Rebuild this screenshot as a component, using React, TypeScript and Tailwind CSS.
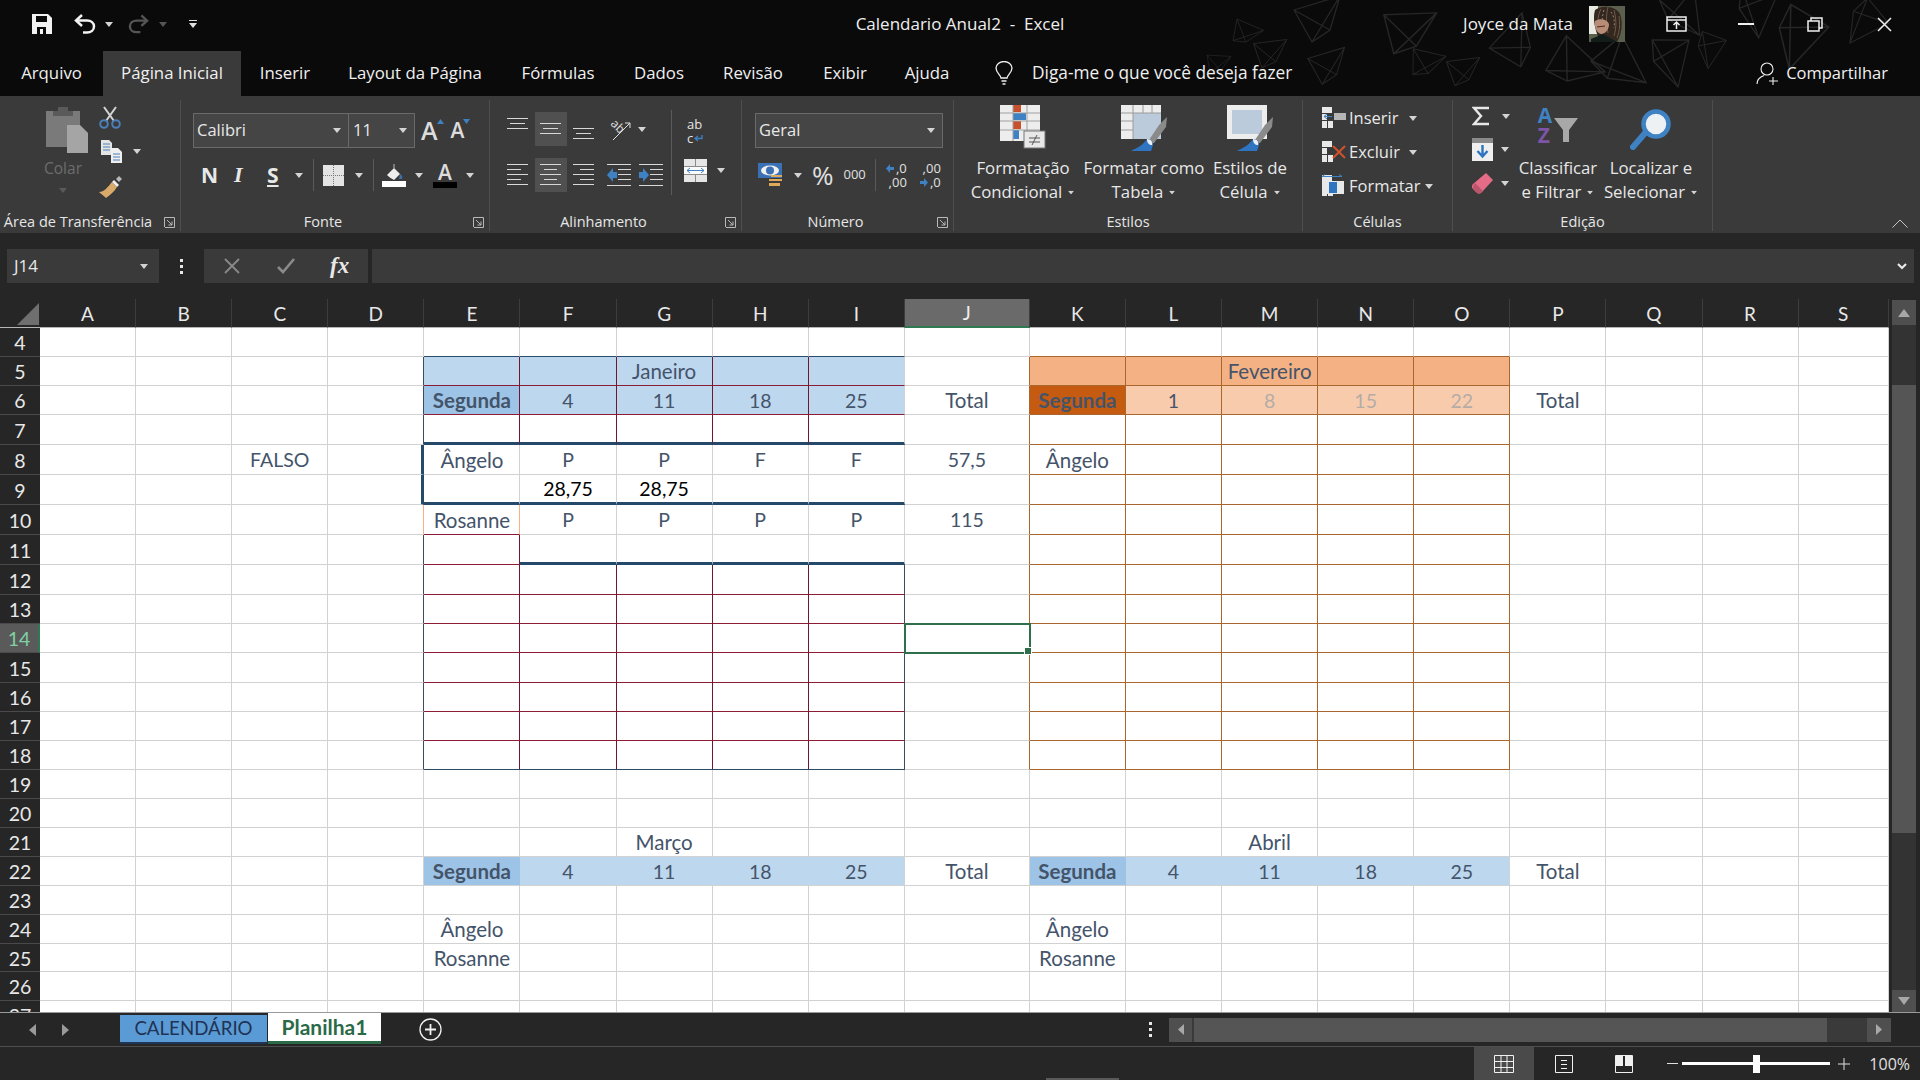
import type { ReactNode } from "react";

const COLS = "ABCDEFGHIJKLMNOPQRS".split("");
const ROWS = Array.from({ length: 24 }, (_, i) => i + 4);

const TEXTS: Record<string, string> = {
  G5: "Janeiro", E6: "Segunda", F6: "4", G6: "11", H6: "18", I6: "25", J6: "Total",
  M5: "Fevereiro", K6: "Segunda", L6: "1", M6: "8", N6: "15", O6: "22", P6: "Total",
  C8: "FALSO", E8: "Ângelo", F8: "P", G8: "P", H8: "F", I8: "F", J8: "57,5", K8: "Ângelo",
  F9: "28,75", G9: "28,75",
  E10: "Rosanne", F10: "P", G10: "P", H10: "P", I10: "P", J10: "115",
  G21: "Março", M21: "Abril",
  E22: "Segunda", F22: "4", G22: "11", H22: "18", I22: "25", J22: "Total",
  K22: "Segunda", L22: "4", M22: "11", N22: "18", O22: "25", P22: "Total",
  E24: "Ângelo", K24: "Ângelo", E25: "Rosanne", K25: "Rosanne",
};

const GRID_R = "border-r border-r-[#d2d2d2]";
const GRID_B = "border-b border-b-[#d2d2d2]";
const WINE_R = "border-r border-r-[#6e1830]";
const WINE_B = "border-b border-b-[#8c1c36]";
const NAVY_R = "border-r border-r-[#3d4d5e]";
const NAVY_B = "border-b border-b-[#2b4a66]";
const THICK_R = "border-r-[3px] border-r-[#25496a]";
const THICK_B = "border-b-[3px] border-b-[#25496a]";
const BROWN_R = "border-r border-r-[#a9672e]";
const BROWN_B = "border-b border-b-[#a9672e]";
const PEACH_R = "border-r border-r-[#f4b183]";
const NONE_R = "border-r border-r-transparent";

function rightBorder(r: number, c: number) {
  if (r === 22 && ((c >= 4 && c <= 7) || (c >= 10 && c <= 13))) return NONE_R;
  if (r >= 5 && r <= 18 && c >= 9 && c <= 14) return BROWN_R;
  if (r < 5 || r > 18) return GRID_R;
  if (c === 3) {
    if (r === 8 || r === 9) return THICK_R;
    if (r === 10) return PEACH_R;
    return NAVY_R;
  }
  if (c >= 4 && c <= 7) {
    if (r <= 7 || r >= 12) return WINE_R;
    if (r === 10 && c === 4) return PEACH_R;
    if (r === 11 && c === 4) return WINE_R;
    return GRID_R;
  }
  if (c === 8 && r >= 12) return NAVY_R;
  return GRID_R;
}

function bottomBorder(r: number, c: number) {
  if (c >= 10 && c <= 14 && r >= 4 && r <= 18) return BROWN_B;
  if (c < 4 || c > 8) return GRID_B;
  if (r === 4 || r === 18) return NAVY_B;
  if (r === 7 || r === 9) return THICK_B;
  if (r === 5 || r === 6 || (r >= 12 && r <= 17)) return WINE_B;
  if (r === 10 || r === 11) return c === 4 ? WINE_B : r === 11 ? THICK_B : GRID_B;
  return GRID_B;
}

function fill(r: number, c: number) {
  if (r === 5 && c >= 4 && c <= 8) return "bg-[#bdd7ee]";
  if (r === 5 && c >= 10 && c <= 14) return "bg-[#f4b183]";
  if (r === 6 && c === 4) return "bg-[#9dc3e6]";
  if (r === 6 && c >= 5 && c <= 8) return "bg-[#bdd7ee]";
  if (r === 6 && c === 10) return "bg-[#c55a11]";
  if (r === 6 && c >= 11 && c <= 14) return "bg-[#f8cbad]";
  if (r === 22 && (c === 4 || c === 10)) return "bg-[#9dc3e6]";
  if (r === 22 && ((c >= 5 && c <= 8) || (c >= 11 && c <= 14))) return "bg-[#bdd7ee]";
  return "bg-white";
}

function textColor(key: string) {
  if (key === "F9" || key === "G9") return "text-black";
  if (key === "M6" || key === "N6" || key === "O6") return "text-[#b5aca6]";
  return "text-[#44546a]";
}

function Caret({ className = "" }: { className?: string }) {
  return (
    <svg width="8" height="5" viewBox="0 0 8 5" className={className}>
      <path d="M0 0h8L4 5z" fill="#d4d4d4" />
    </svg>
  );
}

function Launcher() {
  return (
    <svg width="11" height="11" viewBox="0 0 11 11" fill="none" stroke="#b8b8b8">
      <path d="M.5 10V.5H10.5V10.5H1" />
      <path d="M3 3l5 5M8 4.5V8H4.5" />
    </svg>
  );
}

function Group({ width, label, launcher, children }: { width: string; label: string; launcher?: boolean; children: ReactNode }) {
  return (
    <div className={`${width} mt-1 h-[131px] shrink-0 border-r border-[#4e4e4e] flex flex-col`}>
      <div className="h-[113px] flex">{children}</div>
      <div className="h-[18px] flex items-center text-[14.5px] text-[#e6e6e6]">
        <span className={`flex-1 text-center whitespace-nowrap ${launcher ? "pr-[8px]" : ""}`}>{label}</span>
        {launcher && (
          <span className="mr-[5px] flex">
            <Launcher />
          </span>
        )}
      </div>
    </div>
  );
}

function AlignLines({ rows }: { rows: number[][] }) {
  return (
    <svg width="22" height="24" viewBox="0 0 22 24" stroke="#d8d8d8" strokeWidth="1">
      {rows.map((l, i) => (
        <line key={i} x1={l[0]} x2={l[1]} y1={l[2] + 0.5} y2={l[2] + 0.5} />
      ))}
    </svg>
  );
}

const V_TOP = [[0, 21, 1], [3, 18, 6], [0, 21, 11]];
const V_MID = [[0, 21, 6], [3, 18, 11], [0, 21, 16]];
const V_BOT = [[0, 21, 11], [3, 18, 16], [0, 21, 21]];
const H_LEFT = [[0, 21, 1], [0, 14, 6], [0, 21, 11], [0, 14, 16], [0, 21, 21]];
const H_CENTER = [[0, 21, 1], [4, 17, 6], [0, 21, 11], [4, 17, 16], [0, 21, 21]];
const H_RIGHT = [[0, 21, 1], [7, 21, 6], [0, 21, 11], [7, 21, 16], [0, 21, 21]];

function Indent({ flip }: { flip?: boolean }) {
  return (
    <svg width="24" height="24" viewBox="0 0 24 24">
      <g stroke="#d8d8d8">
        <path d="M0 1.500H24M0 22.500H24M11 6.500H24M11 11.500H24M11 16.500H24" />
      </g>
      {flip ? (
        <path d="M0 9h4V5l6 7-6 7v-4H0z" fill="#3f82c4" />
      ) : (
        <path d="M10 9H6V5l-6 7 6 7v-4h4z" fill="#3f82c4" />
      )}
    </svg>
  );
}

function Kite({ x, y, r, s = 1 }: { x: number; y: number; r: number; s?: number }) {
  return (
    <path
      transform={`translate(${x} ${y}) rotate(${r}) scale(${s})`}
      d="M-24-8L22-22L12 12L-6 24ZM-24-8L12 12M22-22L-6 24"
    />
  );
}

function TitleBar() {
  return (
    <div className="h-[51px] pb-[3px] grid grid-cols-[1fr_auto_1fr] items-center">
      <div className="flex items-center pl-8">
        <svg width="20" height="20" viewBox="0 0 20 20">
          <path d="M0 0h16l4 4v16H0z" fill="#f2f2f2" />
          <path d="M4 2h11v6H4z" fill="#0a0a0a" />
          <path d="M5 13h9v7H5z" fill="#0a0a0a" />
          <path d="M8 15h3v5H8z" fill="#f2f2f2" />
        </svg>
        <svg width="22" height="20" viewBox="0 0 22 20" fill="none" stroke="#f2f2f2" strokeWidth="2.500" className="ml-[22px]">
          <path d="M8 1L2 6.500 8 12" />
          <path d="M2 6.500h11c4 0 7 2.500 7 6s-3 6-7 6H9" />
        </svg>
        <Caret className="ml-[9px]" />
        <svg width="21" height="20" viewBox="0 0 22 20" fill="none" stroke="#555" strokeWidth="2.500" className="ml-[15px]">
          <path d="M14 1l6 5.500L14 12" />
          <path d="M20 6.500H9c-4 0-7 2.500-7 6s3 6 7 6h4" />
        </svg>
        <svg width="8" height="5" viewBox="0 0 8 5" className="ml-[10px]">
          <path d="M0 0h8L4 5z" fill="#555" />
        </svg>
        <svg width="8" height="8" viewBox="0 0 8 8" className="ml-[22px]">
          <path d="M0 0h8v1H0z M0 3h8L4 8z" fill="#e0e0e0" />
        </svg>
      </div>
      <div className="text-[17px] text-[#efefef] whitespace-pre">Calendario Anual2  -  Excel</div>
      <div className="flex items-center justify-end text-[17px] text-[#efefef]">
        <span>Joyce da Mata</span>
        <svg width="36" height="36" viewBox="0 0 36 36" className="ml-[16px]">
          <rect width="36" height="36" fill="#5b5f4e" />
          <rect width="9" height="28" fill="#e9ebe2" />
          <path d="M6 4C12-1 26-1 31 8c3 8 2 20-3 28H12C7 28 3 14 6 4z" fill="#33271e" />
          <path d="M12 3c-3 6-4 12-2 20M19 1c-2 8-2 16 0 26M25 4c2 8 3 16 0 26M30 10c1 8 1 14-2 22" stroke="#6e5a48" fill="none" />
          <path d="M22 6c3 4 4 10 3 16M15 4c-2 6-2 10-1 15" stroke="#8a8674" fill="none" strokeDasharray="2 2" />
          <path d="M6 15c5-3 12-2 14 3 0 6-4 10-8 10-4-1-7-6-6-13z" fill="#b98c77" />
          <path d="M8 21l8-1" stroke="#4a2d25" />
          <path d="M2 33l12-5 14 8H2z" fill="#121c19" />
        </svg>
        <svg width="21" height="16" viewBox="0 0 21 16" fill="none" stroke="#f0f0f0" strokeWidth="1.500" className="ml-[41px]">
          <path d="M1 1h19v14H1zM1 4h19" />
          <path d="M10.500 13V6.500M7.500 9l3-3 3 3" />
        </svg>
        <span className="ml-[51px] w-4 h-[2px] bg-[#f0f0f0]" />
        <svg width="16" height="15" viewBox="0 0 16 15" fill="none" stroke="#f0f0f0" strokeWidth="1.500" className="ml-[53px]">
          <path d="M1 4h11v10H1zM4 4V1h11v10h-3" />
        </svg>
        <svg width="15" height="15" viewBox="0 0 15 15" stroke="#f0f0f0" strokeWidth="1.500" className="ml-[54px] mr-[28px]">
          <path d="M1 1l13 13M14 1L1 14" />
        </svg>
      </div>
    </div>
  );
}

const TABS: [string, string][] = [
  ["Arquivo", "w-[103px]"],
  ["Página Inicial", "w-[138px] bg-[#3a3a3a]"],
  ["Inserir", "w-[88px]"],
  ["Layout da Página", "w-[172px]"],
  ["Fórmulas", "w-[114px]"],
  ["Dados", "w-[88px]"],
  ["Revisão", "w-[100px]"],
  ["Exibir", "w-[84px]"],
  ["Ajuda", "w-[80px]"],
];

function TabRow() {
  return (
    <div className="h-[45px] flex text-[16.8px] text-[#f0f0f0]">
      {TABS.map(([name, cls]) => (
        <div key={name} className={`${cls} pb-[2px] flex items-center justify-center whitespace-nowrap`}>
          {name}
        </div>
      ))}
      <div className="flex items-center ml-[28px] pb-[2px]">
        <svg width="18" height="24" viewBox="0 0 18 24" fill="none" stroke="#f0f0f0" strokeWidth="1.300">
          <path d="M6 17c0-3-5-5-5-10a8 6.500 0 0 1 16 0c0 5-5 7-5 10z" />
          <path d="M6.500 20h5M7.500 23h3" />
        </svg>
        <span className="ml-[19px] text-[17.3px]">Diga-me o que você deseja fazer</span>
      </div>
      <div className="ml-auto flex items-center pr-[32px] text-[16.5px]">
        <svg width="23" height="23" viewBox="0 0 23 23" fill="none" stroke="#efefef" strokeWidth="1.100">
          <circle cx="11" cy="7" r="6" />
          <path d="M1 22c0-5 3-7 7-8.500M17 15v8M13 19h9" />
        </svg>
        <span className="ml-[7px]">Compartilhar</span>
      </div>
    </div>
  );
}

function ClipboardGroup() {
  return (
    <Group width="w-[181px]" label="Área de Transferência" launcher>
      <div className="ml-[36px] w-[54px] flex flex-col items-center pt-[7px] text-[#6d6d6d] text-[15.500px]">
        <svg width="42" height="46" viewBox="0 0 42 46" className="ml-[7px]">
          <path d="M0 4h34v36H0z" fill="#7a7a7a" />
          <path d="M7 4h20v5H7zM12 0h10v4H12z" fill="#5a5a5a" />
          <path d="M21 18h13l8 8v20H21z" fill="#a5a5a5" />
        </svg>
        <span className="mt-[5px] leading-[20px]">Colar</span>
        <svg width="8" height="5" viewBox="0 0 8 5" className="mt-[10px]">
          <path d="M0 0h8L4 5z" fill="#5a5a5a" />
        </svg>
      </div>
      <div className="ml-[9px] flex flex-col pt-[6px]">
        <svg width="22" height="23" viewBox="0 0 22 23" fill="none">
          <path d="M5 1l10 14M17 1L7 15" stroke="#d5d5d5" strokeWidth="2" />
          <circle cx="5" cy="18" r="3.800" stroke="#4a7fb8" strokeWidth="2" />
          <circle cx="17" cy="18" r="3.800" stroke="#4a7fb8" strokeWidth="2" />
        </svg>
        <div className="flex items-center mt-[11px] ml-[2px]">
          <svg width="21" height="23" viewBox="0 0 21 23">
            <path d="M0 0h8l3 3v12H0z" fill="#e4e4e4" />
            <path d="M2 4h7M2 7h7M2 10h7" stroke="#4a7fb8" />
            <path d="M10 8h7l4 4v11H10z" fill="#efefef" />
            <path d="M12 14h7M12 17h7M12 20h7" stroke="#4a7fb8" />
          </svg>
          <Caret className="ml-[11px]" />
        </div>
        <svg width="23" height="22" viewBox="0 0 23 22" className="mt-[13px]">
          <path d="M13 6l5 5c-3 5-7 8-11 11-2-2-5-4-7-6 5 0 9-5 13-10z" fill="#d9aa6a" />
          <path d="M13 6l5 5 2-2-5-5z" fill="#efefef" />
          <path d="M17 3l3-3 3 3-3 3z" fill="#b8b8b8" />
        </svg>
      </div>
    </Group>
  );
}

function FontGroup() {
  return (
    <Group width="w-[309px]" label="Fonte" launcher>
      <div className="pl-3 pt-[13px] flex flex-col">
        <div className="flex items-center h-[35px]">
          <div className="w-[156px] h-[35px] bg-[#454545] border border-[#6a6a6a] flex items-center justify-between pl-[3px] pr-[7px] text-[16.500px] text-[#e8e8e8]">
            Calibri <Caret />
          </div>
          <div className="w-[66px] h-[35px] bg-[#454545] border border-l-0 border-[#6a6a6a] flex items-center justify-between pl-[4px] pr-[7px] text-[16.500px] text-[#e8e8e8]">
            11 <Caret />
          </div>
          <div className="ml-[6px] relative text-[25px] leading-none font-semibold text-[#dcdcdc]">
            A
            <svg width="7" height="5" viewBox="0 0 7 5" className="absolute -right-[6px] top-[1px]">
              <path d="M3.500 0l3.500 5H0z" fill="#3f82c4" />
            </svg>
          </div>
          <div className="ml-[13px] relative text-[21px] leading-none font-semibold text-[#dcdcdc]">
            A
            <svg width="7" height="5" viewBox="0 0 7 5" className="absolute -right-[6px] -top-[1px]">
              <path d="M0 0h7L3.500 5z" fill="#3f82c4" />
            </svg>
          </div>
        </div>
        <div className="flex items-center mt-[11px] h-[32px] text-[#e8e8e8]">
          <span className="ml-[8px] w-[17px] text-[21px] font-bold leading-none">N</span>
          <span className="ml-[16px] w-[13px] text-[22px] italic font-bold font-['Liberation_Serif',serif] leading-none">I</span>
          <span className="ml-[20px] w-[13px] text-[21px] font-bold underline leading-none">S</span>
          <Caret className="ml-[15px]" />
          <span className="ml-[10px] w-px h-[32px] bg-[#5a5a5a]" />
          <svg width="21" height="21" viewBox="0 0 21 21" className="ml-[9px]">
            <rect width="21" height="21" fill="#e4e4e4" />
            <path d="M10.500 0v21M0 10.500h21" stroke="#777" strokeDasharray="1 1" />
          </svg>
          <Caret className="ml-[11px]" />
          <span className="ml-[10px] w-px h-[32px] bg-[#5a5a5a]" />
          <svg width="24" height="24" viewBox="0 0 24 24" className="ml-[8px]">
            <path d="M5 12l7-7 6 6-6 6c-2-1-5-3-7-5z" fill="#eeeeee" />
            <path d="M12 5V1" stroke="#bbb" />
            <path d="M18 11c2 1 3 3 2 5h-3z" fill="#3f6fa8" />
            <path d="M0 18h24v6H0z" fill="#fff" />
          </svg>
          <Caret className="ml-[9px]" />
          <div className="ml-[10px] w-[24px] flex flex-col items-center">
            <span className="text-[21px] leading-[20px] font-semibold text-[#dcdcdc]">A</span>
            <span className="w-[24px] h-[6px] bg-black" />
          </div>
          <Caret className="ml-[9px]" />
        </div>
      </div>
    </Group>
  );
}

function AlignmentGroup() {
  const cell = "w-[32px] h-[34px] flex items-center justify-center";
  return (
    <Group width="w-[252px]" label="Alinhamento" launcher>
      <div className="pl-[12px] pt-[12px] flex">
        <div className="flex flex-col gap-[12px]">
          <div className="flex items-center">
            <div className={cell}><AlignLines rows={V_TOP} /></div>
            <div className={`${cell} bg-[#505050] mx-px`}><AlignLines rows={V_MID} /></div>
            <div className={cell}><AlignLines rows={V_BOT} /></div>
            <svg width="28" height="24" viewBox="0 0 28 24" className="ml-[5px] overflow-visible">
              <text x="5" y="13" fontSize="12" fill="#e0e0e0" transform="rotate(45 12 10)" fontFamily="Open Sans">ab</text>
              <path d="M8 23L25 6M25 6h-5M25 6v5" stroke="#e0e0e0" fill="none" />
            </svg>
            <Caret className="ml-[5px]" />
          </div>
          <div className="flex items-center">
            <div className={cell}><AlignLines rows={H_LEFT} /></div>
            <div className={`${cell} bg-[#505050] mx-px`}><AlignLines rows={H_CENTER} /></div>
            <div className={cell}><AlignLines rows={H_RIGHT} /></div>
            <div className="ml-[7px] flex items-center gap-2">
              <Indent />
              <Indent flip />
            </div>
          </div>
        </div>
        <span className="ml-[8px] -mt-[2px] w-px h-[85px] bg-[#5a5a5a]" />
        <div className="ml-[12px] flex flex-col">
          <div className="ml-[3px] pt-[5px] text-[13px] leading-[14px] text-[#e4e4e4] flex flex-col">
            <span>ab</span>
            <span className="flex items-center">
              c
              <svg width="9" height="7" viewBox="0 0 9 7" className="ml-[1px]">
                <path d="M8 0v3.500H2M4 1L1 3.500 4 6" stroke="#3f82c4" fill="none" strokeWidth="1.300" />
              </svg>
            </span>
          </div>
          <div className="flex items-center mt-[14px]">
            <svg width="23" height="23" viewBox="0 0 23 23">
              <rect width="23" height="23" fill="#e6e6e6" />
              <path d="M0 7.500h23M0 15.500h23M11.500 0v7M11.500 16v7" stroke="#8a8a8a" />
              <rect y="8" width="23" height="7" fill="#fbfbfb" />
              <path d="M3 11.500h17M3 11.500l3-2.500M3 11.500l3 2.500M20 11.500l-3-2.500M20 11.500l-3 2.500" stroke="#3f82c4" fill="none" />
            </svg>
            <Caret className="ml-[10px]" />
          </div>
        </div>
      </div>
    </Group>
  );
}

function NumberGroup() {
  return (
    <Group width="w-[212px]" label="Número" launcher>
      <div className="pl-[13px] pt-[13px] flex flex-col">
        <div className="w-[188px] h-[35px] bg-[#454545] border border-[#6a6a6a] flex items-center justify-between pl-[3px] pr-[7px] text-[16.500px] text-[#e8e8e8]">
          Geral <Caret />
        </div>
        <div className="flex items-center mt-[11px] h-[32px] text-[#e0e0e0]">
          <svg width="25" height="24" viewBox="0 0 25 24" className="ml-[3px]">
            <rect width="24" height="15" fill="#3a70b4" />
            <ellipse cx="12" cy="7.500" rx="9" ry="5" fill="#f0f0f0" />
            <circle cx="12" cy="7.500" r="4" fill="#3a70b4" />
            <path d="M11 16h13v2H11zM13 12h11v2H13zM11 20h11v3H11z" fill="#e0a95a" />
          </svg>
          <Caret className="ml-[11px]" />
          <span className="ml-[10px] text-[26px] leading-none">%</span>
          <span className="ml-[10px] text-[13px]">000</span>
          <span className="ml-[9px] w-px h-[32px] bg-[#5a5a5a]" />
          <div className="ml-[9px] w-[22px] text-[13px] leading-[14px] text-right">
            <div className="flex justify-end items-center">
              <svg width="8" height="9" viewBox="0 0 8 9" className="mr-[2px]"><path d="M4 0v3h4v3H4v3L0 4.500z" fill="#3f82c4" /></svg>,0
            </div>
            <div>,00</div>
          </div>
          <div className="ml-[10px] w-[24px] text-[13px] leading-[14px] text-right">
            <div>,00</div>
            <div className="flex justify-end items-center">
              <svg width="8" height="9" viewBox="0 0 8 9" className="mr-[2px]"><path d="M4 0v3H0v3h4v3l4-4.500z" fill="#3f82c4" /></svg>,0
            </div>
          </div>
        </div>
      </div>
    </Group>
  );
}

function Big({ width, icon, lines }: { width: string; icon: ReactNode; lines: [string, string] }) {
  return (
    <div className={`${width} flex flex-col items-center text-[16.800px] leading-[24px] text-[#e8e8e8]`}>
      <div className="h-[56px] pt-[5px]">{icon}</div>
      <span className="whitespace-nowrap">{lines[0]}</span>
      <span className="flex items-center whitespace-nowrap">
        {lines[1]}
        <Caret className="ml-[5px] scale-75" />
      </span>
    </div>
  );
}

function BrushIcon({ cell }: { cell?: boolean }) {
  return (
    <svg width="46" height="46" viewBox="0 0 46 46">
      <rect x="0" y="0" width="40" height="34" fill="#ededed" />
      <rect x={cell ? 5 : 12} y={cell ? 5 : 8} width={cell ? 30 : 28} height={cell ? 24 : 26} fill="#bccbdb" />
      {!cell && <path d="M0 8h40M12 0v34M0 16h12M0 25h12M22 0v8M31 0v8" stroke="#9a9a9a" />}
      <path d="M26 38l12-18 8-8-1 10-12 16z" fill="#8a8a8a" />
      <path d="M26 34c4 0 6 3 6 6l-2 6H10c6-3 12-6 16-12z" fill="#2f74c0" />
      <path d="M26 34c4 0 6 3 5 6-3 0-5-2-5-6z" fill="#eaf0f6" />
    </svg>
  );
}

function StylesGroup() {
  return (
    <Group width="w-[349px]" label="Estilos">
      <Big
        width="w-[129px] pl-[9px]"
        lines={["Formatação", "Condicional"]}
        icon={
          <svg width="46" height="46" viewBox="0 0 46 46">
            <rect width="40" height="36" fill="#ededed" />
            <path d="M13 0h8v7h-8zM13 16h8v8h-8z" fill="#c8502d" />
            <path d="M13 8h13v7H13zM13 25h6v9h-6z" fill="#3f82c4" />
            <path d="M13 0v36M27 0v36M0 8h40M0 16h40M0 25h40" stroke="#a0a0a0" />
            <rect x="24" y="26" width="21" height="17" fill="#e8e8e8" stroke="#777" />
            <path d="M29 33h11M29 37h11M37 30l-5 10" stroke="#555" />
          </svg>
        }
      />
      <Big width="w-[122px]" lines={["Formatar como", "Tabela"]} icon={<BrushIcon />} />
      <Big width="w-[90px]" lines={["Estilos de", "Célula"]} icon={<BrushIcon cell />} />
    </Group>
  );
}

function CellRowIcon({ kind }: { kind: "ins" | "del" | "fmt" }) {
  return (
    <svg width="28" height="24" viewBox="0 0 28 24">
      <g fill="#e8e8e8">
        <path d="M1 1h10v6H1zM1 15h5v7H1zM7 15h5v7H7z" />
        {kind !== "fmt" && <path d="M1 8h5v6H1z" />}
        {kind === "fmt" && <path d="M1 7h22v13H1z" />}
      </g>
      {kind === "ins" && <path d="M13 7h12v7H13z" fill="#b5b5b5" />}
      {kind === "ins" && <path d="M11 10.500H3M3 10.500l3-2.500M3 10.500l3 2.500" stroke="#3f82c4" fill="none" />}
      {kind === "del" && <path d="M12 6l12 12M24 6L12 18" stroke="#d2512c" strokeWidth="2" />}
      {kind === "fmt" && <path d="M8 8h8v11H8z" fill="#2f74c0" />}
      {kind === "fmt" && <path d="M1 2.500h20M1 2.500l3-2M21 2.500l-3-2" stroke="#3f82c4" fill="none" />}
    </svg>
  );
}

function CellsGroup() {
  const row = "flex items-center h-[34px] text-[16.500px] text-[#e8e8e8]";
  return (
    <Group width="w-[150px]" label="Células">
      <div className="pl-[18px] pt-[1px] flex flex-col">
        <div className={row}>
          <CellRowIcon kind="ins" />
          <span className="w-[60px]">Inserir</span>
          <Caret />
        </div>
        <div className={row}>
          <CellRowIcon kind="del" />
          <span className="w-[60px]">Excluir</span>
          <Caret />
        </div>
        <div className={row}>
          <CellRowIcon kind="fmt" />
          <span>Formatar</span>
          <Caret className="ml-[5px]" />
        </div>
      </div>
    </Group>
  );
}

function EditGroup() {
  return (
    <Group width="w-[260px]" label="Edição">
      <div className="pl-[19px] pt-[5px] w-[64px] flex flex-col">
        <div className="flex items-center h-[22px]">
          <svg width="18" height="20" viewBox="0 0 18 20" fill="none" stroke="#e8e8e8" strokeWidth="2.400">
            <path d="M17 2H2l7 8-7 8h15" />
          </svg>
          <Caret className="ml-[12px]" />
        </div>
        <div className="flex items-center mt-[10px] h-[24px]">
          <svg width="21" height="23" viewBox="0 0 21 23">
            <rect width="21" height="23" fill="#efefef" />
            <rect width="21" height="5" fill="#8a8a8a" />
            <path d="M10.500 7v11M5.500 13l5 5.500 5-5.500" stroke="#2f74c0" strokeWidth="2.400" fill="none" />
          </svg>
          <Caret className="ml-[8px]" />
        </div>
        <div className="flex items-center mt-[11px] h-[22px]">
          <svg width="21" height="21" viewBox="0 0 21 21">
            <path d="M14 0l7 7-11 12c-2 2-4 2-6 0l-3-3c-2-2-1-4 0-5z" fill="#e46c86" />
            <path d="M3 10l8 8-2 2c-2 1-3 1-5-1l-2-2c-2-2-1-4 1-7z" fill="#b9566c" />
          </svg>
          <Caret className="ml-[8px]" />
        </div>
      </div>
      <div className="w-[82px] flex flex-col items-center text-[16.800px] leading-[24px] text-[#e8e8e8]">
        <div className="h-[56px] pt-[5px] flex items-start">
          <div className="flex flex-col font-bold text-[21px] leading-[20px] pr-[2px]">
            <span className="text-[#3f82c4]">A</span>
            <span className="text-[#7d55a8]">Z</span>
          </div>
          <svg width="24" height="24" viewBox="0 0 24 24" className="mt-[13px]">
            <path d="M0 0h24l-9 12v12H9V12z" fill="#a8a8a8" />
          </svg>
        </div>
        <span>Classificar</span>
        <span className="flex items-center">
          e Filtrar
          <Caret className="ml-[5px] scale-75" />
        </span>
      </div>
      <div className="w-[96px] ml-[4px] flex flex-col items-center text-[16.800px] leading-[24px] text-[#e8e8e8]">
        <div className="h-[56px] pt-[8px]">
          <svg width="42" height="42" viewBox="0 0 42 42">
            <path d="M3 39l13-15" stroke="#3f82c4" strokeWidth="6" strokeLinecap="round" />
            <circle cx="26" cy="16" r="12.500" fill="#eef1f4" stroke="#3f82c4" strokeWidth="4.500" />
          </svg>
        </div>
        <span>Localizar e</span>
        <span className="flex items-center">
          Selecionar
          <Caret className="ml-[5px] scale-75" />
        </span>
      </div>
    </Group>
  );
}

function Ribbon() {
  return (
    <div className="h-[137px] bg-[#3a3a3a] flex">
      <ClipboardGroup />
      <FontGroup />
      <AlignmentGroup />
      <NumberGroup />
      <StylesGroup />
      <CellsGroup />
      <EditGroup />
      <div className="flex-1 flex items-end justify-end pr-[12px] pb-[5px]">
        <svg width="16" height="9" viewBox="0 0 16 9" fill="none" stroke="#c4c4c4">
          <path d="M.5 8.500L8 1l7.500 7.500" />
        </svg>
      </div>
    </div>
  );
}

function FormulaBar() {
  return (
    <div className="h-[66px] bg-[#262626] flex pl-[7px] pt-4">
      <div className="w-[152px] h-[34px] bg-[#3a3a3a] flex items-center justify-between pl-[7px] pr-[11px] text-[17px] text-[#e8e8e8]">
        J14 <Caret />
      </div>
      <div className="w-[45px] h-[34px] flex flex-col items-center justify-center gap-[3px]">
        <span className="w-[3px] h-[3px] bg-[#e8e8e8]" />
        <span className="w-[3px] h-[3px] bg-[#e8e8e8]" />
        <span className="w-[3px] h-[3px] bg-[#e8e8e8]" />
      </div>
      <div className="w-[164px] h-[34px] bg-[#3a3a3a] flex items-center pl-[20px]">
        <svg width="16" height="16" viewBox="0 0 16 16" stroke="#8a8a8a" strokeWidth="1.800">
          <path d="M1 1l14 14M15 1L1 15" />
        </svg>
        <svg width="20" height="16" viewBox="0 0 20 16" fill="none" stroke="#8a8a8a" strokeWidth="2.600" className="ml-[36px]">
          <path d="M2 9l5 5L18 1" />
        </svg>
        <span className="ml-[34px] text-[23px] italic font-bold font-['Liberation_Serif',serif] text-[#e8e8e8]">fx</span>
      </div>
      <div className="ml-[4px] w-[1542px] h-[34px] bg-[#3a3a3a] flex items-center justify-end pr-[7px]">
        <svg width="10" height="7" viewBox="0 0 10 7" fill="none" stroke="#e8e8e8" strokeWidth="2.200">
          <path d="M1 1l4 4 4-4" />
        </svg>
      </div>
    </div>
  );
}

function Sheet() {
  return (
    <div className="w-[1889px] h-full overflow-hidden grid grid-cols-[40px_repeat(9,96.1px)_125px_repeat(8,96.1px)_90px] grid-rows-[29px_repeat(3,29px)_repeat(6,30px)_29px_29px_30px_repeat(9,29px)_28px_29px_29px] font-['Lato',sans-serif]">
      <div className="bg-[#262626] border-b border-b-[#b5b5b5] flex items-end justify-end pb-[2px] pr-[1px]">
        <svg width="22" height="22" viewBox="0 0 22 22">
          <path d="M22 0v22H0z" fill="#6f6f6f" />
        </svg>
      </div>
      {COLS.map((c) => (
        <div
          key={c}
          className={`flex items-center justify-center pt-[2px] text-[19px] border-b border-r border-r-[#3d3d3d] ${c === "J" ? "bg-[#6a6a6a] border-b-2 border-b-[#2f7a52] text-[#efefef]" : "bg-[#262626] border-b-[#b5b5b5] text-[#e8e8e8]"}`}
        >
          {c}
        </div>
      ))}
      {ROWS.map((r) => (
        <div key={r} className="contents">
          <div
            className={`flex items-center justify-center pt-[2px] text-[19.5px] border-b border-b-[#4a4a4a] ${r === 14 ? "bg-[#5a5a5a] border-r-2 border-r-[#2f7a52] text-[#7fd1a4]" : "bg-[#262626] text-[#e8e8e8]"}`}
          >
            {r}
          </div>
          {COLS.map((c, ci) => {
            const key = `${c}${r}`;
            const bold = key === "E6" || key === "K6" || key === "E22" || key === "K22";
            const selected = key === "J14";
            const word = /[a-z]/.test(TEXTS[key] ?? "");
            return (
              <div
                key={key}
                className={`flex items-center justify-center pt-[1px] whitespace-nowrap ${word ? "text-[20.5px]" : "text-[19.5px]"} ${rightBorder(r, ci)} ${bottomBorder(r, ci)} ${fill(r, ci)} ${textColor(key)} ${bold ? "font-bold" : ""} ${selected ? "relative z-10 outline-2 outline-[#2f6f4c] -outline-offset-1" : ""}`}
              >
                {TEXTS[key]}
                {selected && <span className="absolute -right-[3px] -bottom-[3px] w-[6px] h-[6px] bg-[#2f6f4c] border border-white box-content" />}
              </div>
            );
          })}
        </div>
      ))}
    </div>
  );
}

function VScroll() {
  return (
    <div className="w-[31px] pl-[3px] pr-[4px] pt-px bg-[#262626] flex flex-col">
      <div className="h-[25px] bg-[#4f4f4f] flex items-center justify-center">
        <svg width="12" height="8" viewBox="0 0 12 8"><path d="M6 0l6 8H0z" fill="#a8a8a8" /></svg>
      </div>
      <div className="h-[60px] bg-[#333333]" />
      <div className="h-[448px] bg-[#555555]" />
      <div className="flex-1 bg-[#333333]" />
      <div className="h-[22px] bg-[#4f4f4f] flex items-center justify-center">
        <svg width="12" height="8" viewBox="0 0 12 8"><path d="M0 0h12L6 8z" fill="#a8a8a8" /></svg>
      </div>
    </div>
  );
}

function SheetTabs() {
  return (
    <div className="h-[34px] bg-[#262626] border-t border-[#9a9a9a] flex items-start">
      <div className="w-[120px] h-[33px] flex items-center pl-[29px] gap-[26px]">
        <svg width="7" height="12" viewBox="0 0 7 12"><path d="M7 0v12L0 6z" fill="#9a9a9a" /></svg>
        <svg width="7" height="12" viewBox="0 0 7 12"><path d="M0 0v12l7-6z" fill="#9a9a9a" /></svg>
      </div>
      <div className="w-[147px] h-[29px] mt-[2px] bg-[#5b9bd5] flex items-center justify-center text-[18.7px] text-[#1f3354] font-['Lato',sans-serif] border-b-2 border-[#1f3354]">
        CALENDÁRIO
      </div>
      <div className="w-[113px] h-[31px] ml-px bg-white border-b-[3px] border-[#2b6a47] flex items-center justify-center text-[21px] font-bold text-[#2b6a47] font-['Lato',sans-serif]">
        Planilha1
      </div>
      <svg width="23" height="23" viewBox="0 0 23 23" fill="none" stroke="#f0f0f0" strokeWidth="1.300" className="ml-[38px] mt-[5px]">
        <circle cx="11.500" cy="11.500" r="10.500" />
        <path d="M11.500 6v11M6 11.500h11" strokeWidth="1.800" />
      </svg>
      <div className="ml-auto h-[33px] flex items-center pr-[29px]">
        <div className="flex flex-col gap-[3px] mr-[17px]">
          <span className="w-[3px] h-[3px] bg-[#e8e8e8]" />
          <span className="w-[3px] h-[3px] bg-[#e8e8e8]" />
          <span className="w-[3px] h-[3px] bg-[#e8e8e8]" />
        </div>
        <div className="h-[24px] w-[722px] bg-[#3a3a3a] flex">
          <div className="w-[23px] bg-[#4f4f4f] flex items-center justify-center">
            <svg width="6" height="11" viewBox="0 0 6 11"><path d="M6 0v11L0 5.500z" fill="#a8a8a8" /></svg>
          </div>
          <div className="ml-[2px] w-[633px] bg-[#555555]" />
          <div className="ml-auto w-[24px] bg-[#4f4f4f] flex items-center justify-center">
            <svg width="6" height="11" viewBox="0 0 6 11"><path d="M0 0v11l6-5.500z" fill="#a8a8a8" /></svg>
          </div>
        </div>
      </div>
    </div>
  );
}

function StatusBar() {
  return (
    <div className="relative flex-1 bg-[#262626] border-t border-[#4e4e4e] flex justify-end items-center text-[16px] text-[#e0e0e0] pr-[10px]">
      <div className="w-[60px] h-full bg-[#4a4a4a] flex items-center justify-center">
        <svg width="20" height="18" viewBox="0 0 20 18" fill="none" stroke="#f0f0f0">
          <path d="M.5.500h19v17H.5zM.5 6.500h19M.5 12.500h19M7 .500v17M13 .500v17" />
        </svg>
      </div>
      <svg width="20" height="18" viewBox="0 0 20 18" fill="none" stroke="#f0f0f0" className="ml-[20px]">
        <path d="M1.500.500h17v17h-17zM7 5.500h6M7 9.500h6M7 13.500h6" />
      </svg>
      <svg width="20" height="18" viewBox="0 0 20 18" className="ml-[40px]">
        <path d="M1.500.500h17v17h-17z" fill="none" stroke="#f0f0f0" />
        <path d="M2 1h7v10H2zM11 1h7v10h-7z" fill="#f0f0f0" />
      </svg>
      <span className="ml-[33px] w-[11px] h-px bg-[#e0e0e0]" />
      <div className="ml-[4px] w-[148px] h-[3px] bg-white flex items-center pl-[71px]">
        <span className="w-[7px] h-[18px] bg-white" />
      </div>
      <svg width="12" height="12" viewBox="0 0 12 12" stroke="#e0e0e0" className="ml-[8px]">
        <path d="M6 0v12M0 6h12" />
      </svg>
      <span className="ml-[19px]">100%</span>
      <span className="absolute left-[1046px] bottom-0 w-[73px] h-[2px] bg-[#5a5a5a]" />
    </div>
  );
}

export default function App() {
  return (
    <div className="w-[1920px] h-[1080px] overflow-hidden bg-[#262626] flex flex-col font-['Open_Sans',sans-serif]">
      <div className="relative h-[96px] bg-[#0a0a0a] overflow-hidden">
        <svg width="900" height="96" viewBox="1020 0 900 96" fill="none" stroke="#262626" strokeWidth="1.300" className="absolute right-0 top-0">
          <Kite x={1318} y={18} r={0} />
          <Kite x={1407} y={30} r={15} s={1.1} />
          <Kite x={1245} y={32} r={40} s={0.6} />
          <Kite x={1269} y={52} r={10} s={0.7} />
          <Kite x={1327} y={65} r={0} s={0.8} />
          <Kite x={1217} y={63} r={20} s={0.5} />
          <Kite x={1425} y={62} r={30} s={0.7} />
          <Kite x={1462} y={70} r={10} s={0.7} />
          <Kite x={1514} y={43} r={-30} s={1} />
          <Kite x={1572} y={63} r={60} s={1.1} />
          <Kite x={1618} y={63} r={80} s={1.1} />
          <Kite x={1670} y={57} r={120} s={1} />
          <Kite x={1710} y={47} r={140} s={0.7} />
          <Kite x={1682} y={10} r={100} s={1} />
          <Kite x={1756} y={7} r={130} s={1} />
          <Kite x={1799} y={33} r={150} s={1.2} />
          <Kite x={1866} y={20} r={170} s={0.9} />
        </svg>
        <div className="relative">
          <TitleBar />
          <TabRow />
        </div>
      </div>
      <Ribbon />
      <FormulaBar />
      <div className="h-[713px] flex">
        <Sheet />
        <VScroll />
      </div>
      <SheetTabs />
      <StatusBar />
    </div>
  );
}
